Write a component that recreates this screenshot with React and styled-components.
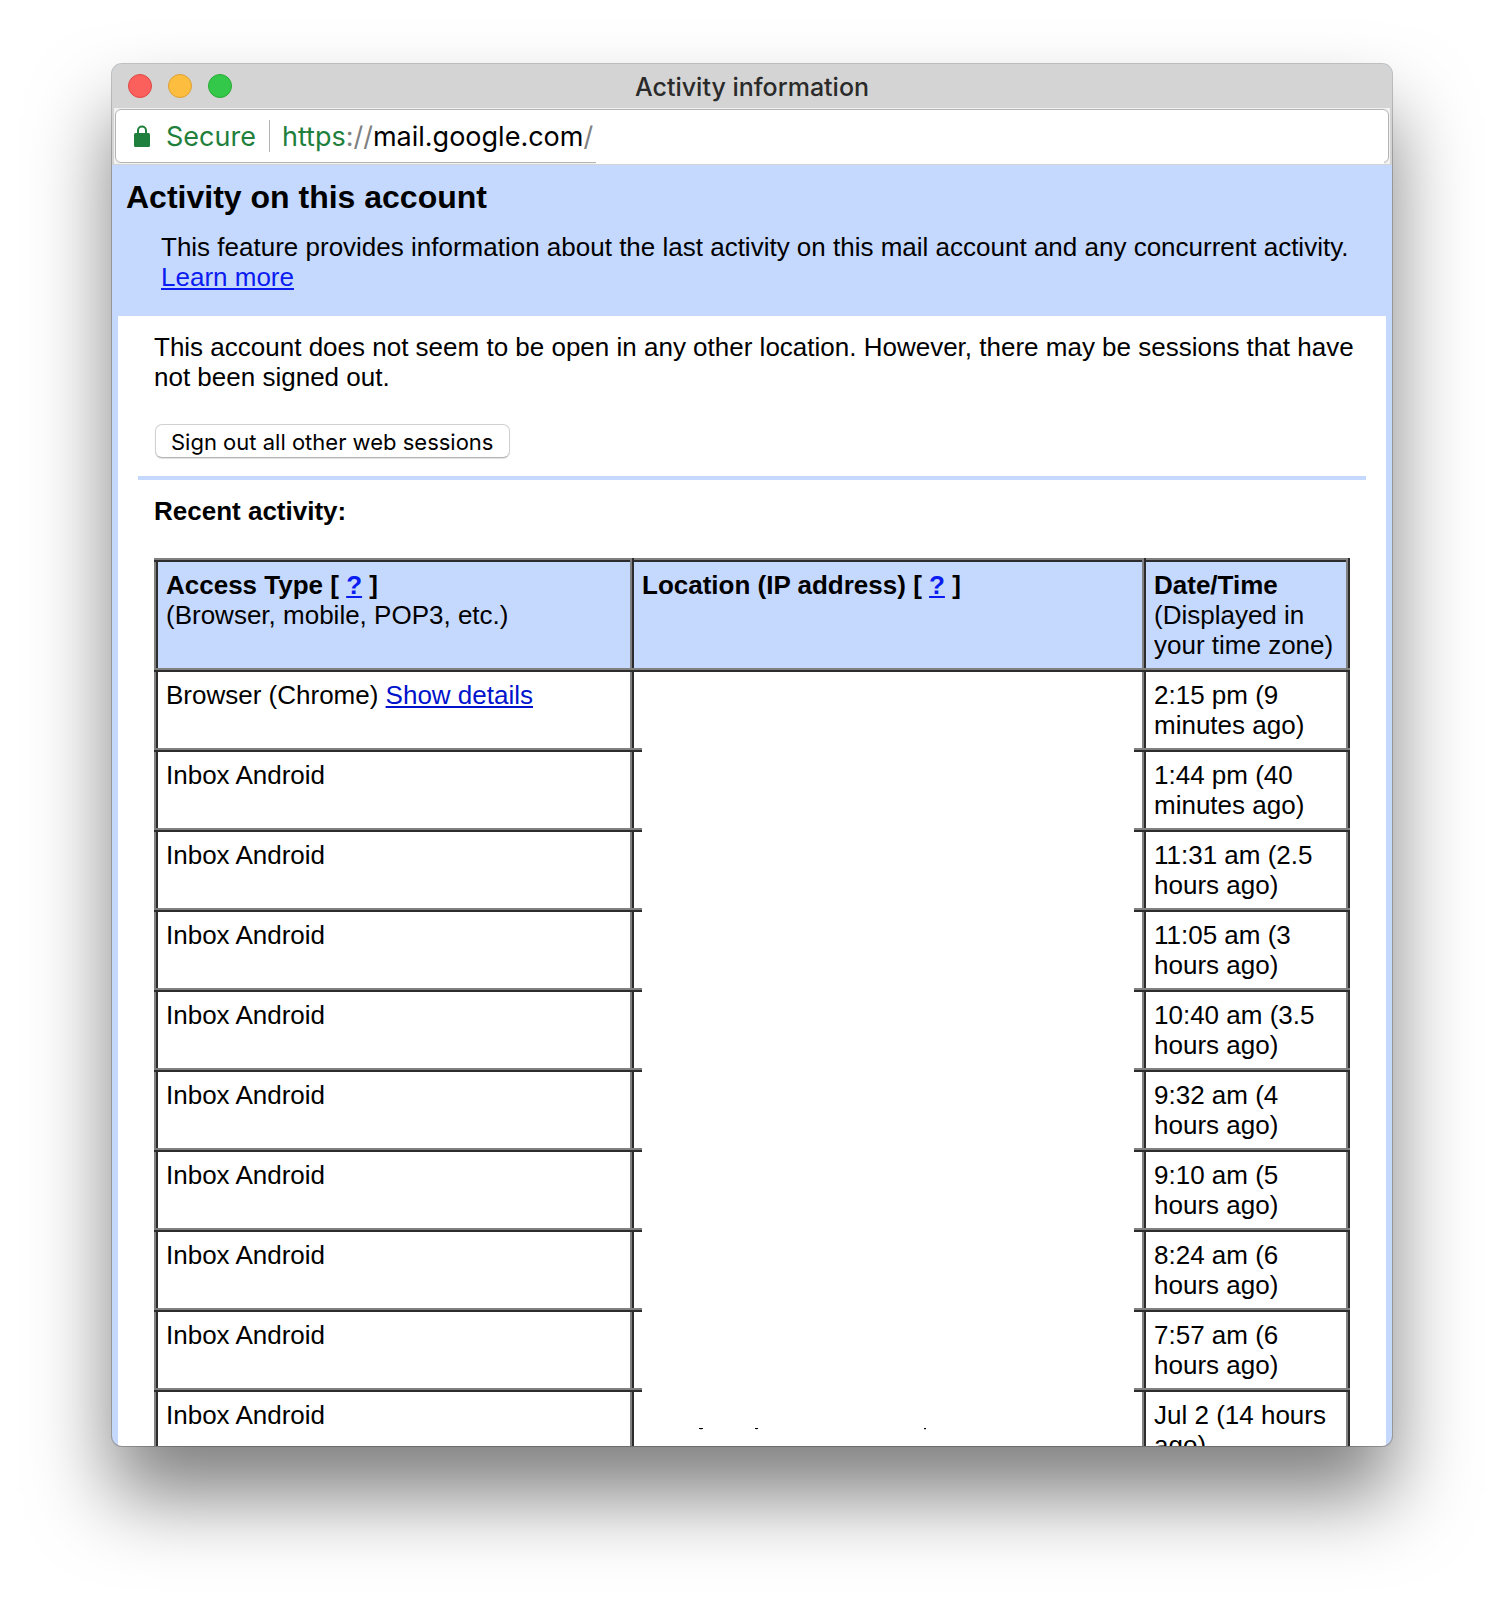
import React from "react";
import styled, { createGlobalStyle } from "styled-components";

const BLUE = "#c5d9ff";
const UI_FONT = `Inter, Roboto, "Liberation Sans", sans-serif`;

const GlobalStyle = createGlobalStyle`
  * { box-sizing: border-box; }
  body {
    margin: 0;
    background: #fff;
    color: #000;
    font: 26px/30px "Liberation Sans", Arial, Helvetica, sans-serif;
  }
`;

const Desktop = styled.div`
  display: flex;
  height: 100vh;
  padding: 64px 112px 160px;
  overflow: hidden;
`;

const Window = styled.main`
  flex: 1;
  min-width: 0;
  display: flex;
  flex-direction: column;
  overflow: hidden;
  border-radius: 10px;
  background: ${BLUE};
  box-shadow: 0 0 0 1px rgba(0, 0, 0, 0.22), 0 50px 80px rgba(0, 0, 0, 0.5);
`;

const TitleBar = styled.header`
  flex: none;
  display: grid;
  grid-template-columns: 1fr auto 1fr;
  align-items: center;
  height: 44px;
  padding: 0 16px;
  background: #d4d4d4;
`;

const WindowControls = styled.div`
  display: flex;
  gap: 16px;
`;

const WindowControl = styled.button`
  width: 24px;
  height: 24px;
  padding: 0;
  border: 1px solid ${(p) => p.$edge};
  border-radius: 50%;
  background: ${(p) => p.$fill};
`;

const WindowTitle = styled.div`
  padding-top: 2px;
  font-family: ${UI_FONT};
  font-size: 25px;
  font-weight: 500;
  color: #2a2a2a;
`;

const Toolbar = styled.div`
  flex: none;
  position: relative;
  height: 57px;
  padding: 1px;
  border: solid #d4d4d4;
  border-width: 0 2px 1px;
  background: #f1f1f1;
`;

const AddressBar = styled.div`
  display: flex;
  align-items: center;
  height: 54px;
  padding-left: 18px;
  border: 1px solid #b4b4b4;
  border-radius: 6px;
  background: #fff;
  font-family: ${UI_FONT};
  font-size: 27px;
`;

const AddressCover = styled.div`
  position: absolute;
  left: 482px;
  right: 6px;
  bottom: 0;
  height: 8px;
  background: #fff;
`;

const Secure = styled.span`
  margin-left: 16px;
  padding-top: 2px;
  color: #1f7f3c;
`;

const Separator = styled.span`
  width: 1px;
  height: 32px;
  margin: 0 12px 0 13px;
  background: #b4b4b4;
`;

const Url = styled.span`
  padding-top: 2px;
`;

const UrlPart = styled.span`
  color: ${(p) => p.$color};
`;

const Intro = styled.section`
  flex: none;
  padding: 14px 14px 24px;
`;

const Heading = styled.h1`
  margin: 0 0 17px;
  font-size: 32px;
  line-height: 36px;
`;

const IntroText = styled.p`
  margin: 0 0 0 35px;
`;

const Link = styled.a`
  color: ${(p) => (p.$deep ? "#0013cc" : "#0b1cf0")};
`;

const Panel = styled.section`
  flex: 1;
  min-height: 0;
  overflow: hidden;
  margin: 0 6px;
  padding: 16px 20px 0;
  background: #fff;
`;

const Sessions = styled.div`
  padding: 0 0 18px 16px;
  border-bottom: 4px solid ${BLUE};
`;

const SessionsText = styled.p`
  margin: 0 0 32px;
`;

const SignOutButton = styled.button`
  display: block;
  height: 34px;
  margin-left: 1px;
  padding: 2px 16px 0 15px;
  border: 1px solid #d0d0d0;
  border-bottom-color: #b4b4b4;
  border-radius: 7px;
  background: #fff;
  box-shadow: 0 1px 1px rgba(0, 0, 0, 0.12);
  font-family: ${UI_FONT};
  font-size: 22px;
  line-height: 30px;
  color: #000;
`;

const Recent = styled.div`
  padding: 16px 16px 0;
`;

const RecentTitle = styled.h2`
  margin: 0 0 32px;
  font-size: 26px;
  line-height: 30px;
`;

const ActivityTable = styled.table`
  width: 100%;
  table-layout: fixed;
  border-collapse: collapse;
`;

const Column = styled.col`
  width: ${(p) => p.$width};
`;

const HeadCell = styled.th`
  padding: 8px;
  border: 4px ridge gray;
  background: ${BLUE};
  text-align: left;
  vertical-align: top;
`;

const HeadNote = styled.div`
  font-weight: normal;
`;

const Cell = styled.td`
  padding: 8px;
  border: 4px ridge gray;
  vertical-align: top;
`;

const Redacted = styled.div`
  position: relative;
  height: 72px;
  margin-bottom: -12px;
  background: #fff;
`;

const rows = [
  ["Browser (Chrome)", "2:15 pm (9 minutes ago)"],
  ["Inbox Android", "1:44 pm (40 minutes ago)"],
  ["Inbox Android", "11:31 am (2.5 hours ago)"],
  ["Inbox Android", "11:05 am (3 hours ago)"],
  ["Inbox Android", "10:40 am (3.5 hours ago)"],
  ["Inbox Android", "9:32 am (4 hours ago)"],
  ["Inbox Android", "9:10 am (5 hours ago)"],
  ["Inbox Android", "8:24 am (6 hours ago)"],
  ["Inbox Android", "7:57 am (6 hours ago)"],
  ["Inbox Android", "Jul 2 (14 hours ago)"],
];

function LockIcon() {
  return (
    <svg width="16" height="22" viewBox="0 0 16 22" aria-hidden="true">
      <path d="M4 9V5.5a4 4 0 0 1 8 0V9" fill="none" stroke="#1f7f3c" strokeWidth="2" />
      <rect y="8" width="16" height="14" rx="1.5" fill="#1f7f3c" />
    </svg>
  );
}

function LetterTips() {
  return (
    <svg width="300" height="40" viewBox="0 0 300 40" display="block" aria-hidden="true">
      <path d="M57 28h4v1h-4zM113 28h3v1h-3zM282 28h2v1h-2z" fill="#000" />
      <path d="M58 29h2v1h-2zM114 29h1v1h-1zM282 29h2v1h-2z" fill="#ccc" />
    </svg>
  );
}

export default function App() {
  return (
    <Desktop>
      <GlobalStyle />
      <Window>
        <TitleBar>
          <WindowControls>
            <WindowControl aria-label="Close" $fill="#fc605c" $edge="#de4744" />
            <WindowControl aria-label="Minimize" $fill="#fdbe40" $edge="#de9f34" />
            <WindowControl aria-label="Zoom" $fill="#34c84a" $edge="#27a934" />
          </WindowControls>
          <WindowTitle>Activity information</WindowTitle>
        </TitleBar>
        <Toolbar>
          <AddressBar>
            <LockIcon />
            <Secure>Secure</Secure>
            <Separator />
            <Url>
              <UrlPart $color="#1f7f3c">https</UrlPart>
              <UrlPart $color="#808080">://</UrlPart>
              <UrlPart $color="#000">mail.google.com</UrlPart>
              <UrlPart $color="#808080">/</UrlPart>
            </Url>
          </AddressBar>
          <AddressCover />
        </Toolbar>
        <Intro>
          <Heading>Activity on this account</Heading>
          <IntroText>
            This feature provides information about the last activity on this mail account and any
            concurrent activity. <Link href="#learn">Learn more</Link>
          </IntroText>
        </Intro>
        <Panel>
          <Sessions>
            <SessionsText>
              This account does not seem to be open in any other location. However, there may be
              sessions that have not been signed out.
            </SessionsText>
            <SignOutButton type="button">Sign out all other web sessions</SignOutButton>
          </Sessions>
          <Recent>
            <RecentTitle>Recent activity:</RecentTitle>
            <ActivityTable>
              <colgroup>
                <Column $width="476px" />
                <Column $width="auto" />
                <Column $width="204px" />
              </colgroup>
              <thead>
                <tr>
                  <HeadCell scope="col">
                    Access Type [ <Link href="#access-type">?</Link> ]
                    <HeadNote>(Browser, mobile, POP3, etc.)</HeadNote>
                  </HeadCell>
                  <HeadCell scope="col">
                    Location (IP address) [ <Link href="#location">?</Link> ]
                  </HeadCell>
                  <HeadCell scope="col">
                    Date/Time
                    <HeadNote>(Displayed in your time zone)</HeadNote>
                  </HeadCell>
                </tr>
              </thead>
              <tbody>
                {rows.map(([access, time], i) => (
                  <tr key={time}>
                    <Cell>
                      {access}
                      {i === 0 && (
                        <>
                          {" "}
                          <Link $deep href="#details">Show details</Link>
                        </>
                      )}
                    </Cell>
                    <Cell>
                      <Redacted>{i === rows.length - 1 && <LetterTips />}</Redacted>
                    </Cell>
                    <Cell>{time}</Cell>
                  </tr>
                ))}
              </tbody>
            </ActivityTable>
          </Recent>
        </Panel>
      </Window>
    </Desktop>
  );
}
